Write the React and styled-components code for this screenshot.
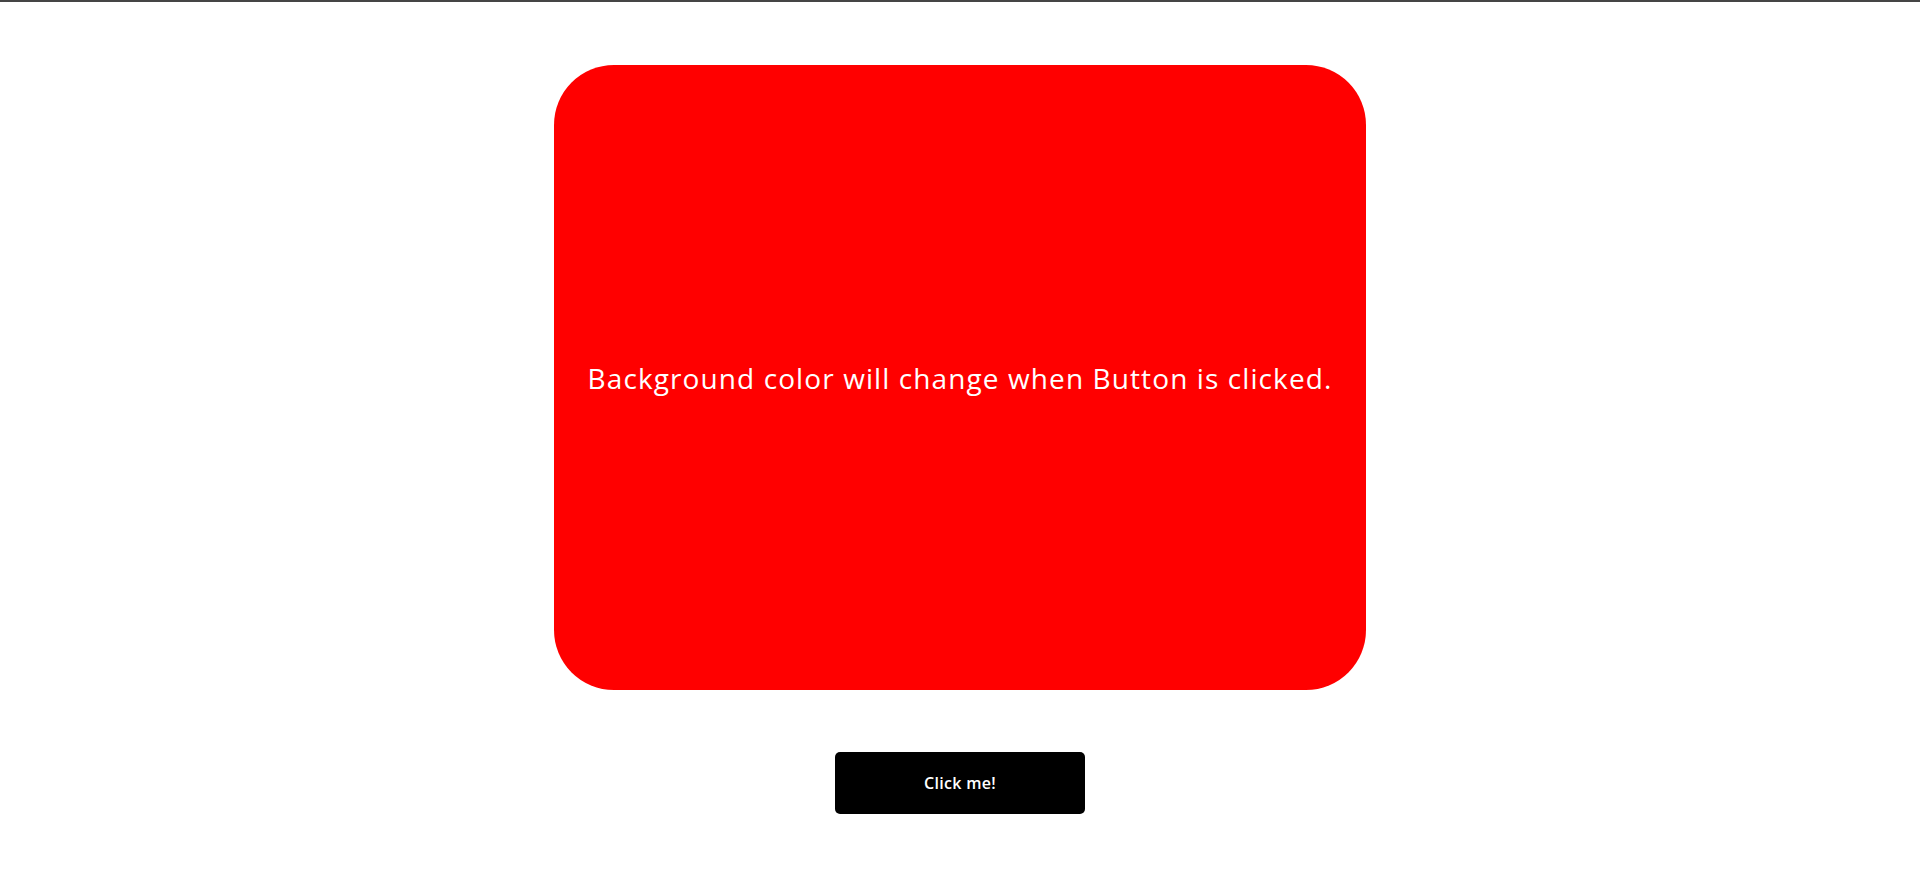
import React, { useState } from "react";
import styled, { createGlobalStyle } from "styled-components";

const GlobalStyle = createGlobalStyle`
  html, body {
    margin: 0;
    padding: 0;
    background: #ffffff;
  }
  body {
    border-top: 2px solid #454545;
    font-family: "Open Sans", "DejaVu Sans", sans-serif;
  }
`;

const Page = styled.main`
  display: flex;
  flex-direction: column;
  align-items: center;
  padding-top: 63px;
`;

const Card = styled.section`
  width: 812px;
  height: 625px;
  border-radius: 60px;
  background: ${(p) => p.$color};
  display: flex;
  align-items: center;
  justify-content: center;
  color: #ffffff;
  font-size: 28px;
  letter-spacing: 1.1px;
`;

const Message = styled.p`
  margin: 0;
  text-align: center;
`;

const Button = styled.button`
  margin-top: 62px;
  width: 250px;
  height: 62px;
  border: none;
  border-radius: 5px;
  background: #000000;
  color: #ffffff;
  font-family: inherit;
  font-size: 16px;
  font-weight: 600;
  letter-spacing: 0.3px;
  cursor: pointer;
`;

const colors = ["#ff0000", "#0000ff", "#008000", "#ffa500"];

export default function App() {
  const [i, setI] = useState(0);
  return (
    <>
      <GlobalStyle />
      <Page>
        <Card $color={colors[i]}>
          <Message>Background color will change when Button is clicked.</Message>
        </Card>
        <Button onClick={() => setI((i + 1) % colors.length)}>Click me!</Button>
      </Page>
    </>
  );
}
